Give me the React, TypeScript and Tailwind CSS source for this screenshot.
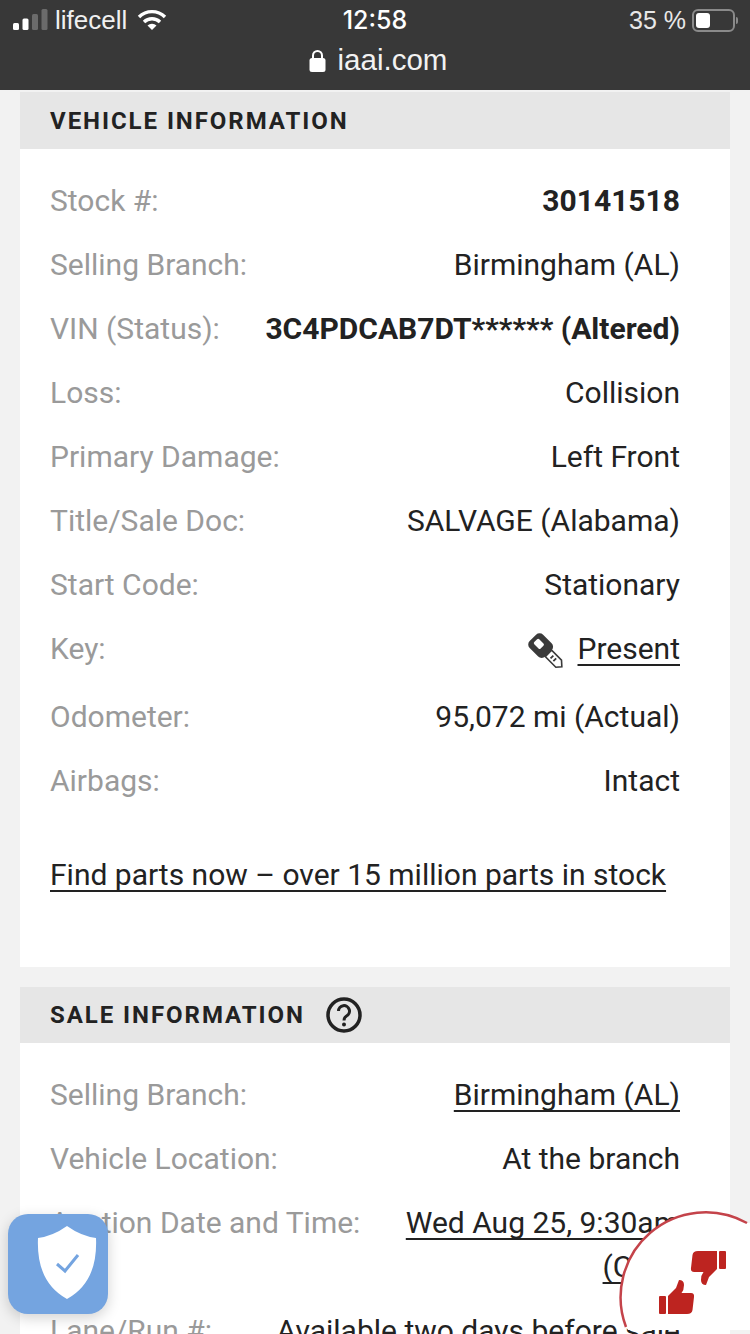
const rows: { label: string; value: string; bold?: boolean }[] = [
  { label: "Stock #:", value: "30141518", bold: true },
  { label: "Selling Branch:", value: "Birmingham (AL)" },
  { label: "VIN (Status):", value: "3C4PDCAB7DT****** (Altered)", bold: true },
  { label: "Loss:", value: "Collision" },
  { label: "Primary Damage:", value: "Left Front" },
  { label: "Title/Sale Doc:", value: "SALVAGE (Alabama)" },
  { label: "Start Code:", value: "Stationary" },
];

function StatusBar() {
  return (
    <div className="h-[90px] bg-[#383838] text-white font-['Liberation_Sans',sans-serif]">
      <div className="grid h-[40px] grid-cols-3 items-center text-[25px] leading-[30px]">
        <div className="flex items-center pl-[13px]">
          <svg width="35" height="22" viewBox="0 0 35 22">
            <rect x="0" y="14" width="6" height="7" rx="1.5" fill="#fff" />
            <rect x="9.5" y="9.5" width="6" height="11.5" rx="1.5" fill="#fff" />
            <rect x="19" y="5" width="6" height="16" rx="1.5" fill="#6b6b6b" />
            <rect x="28.5" y="0" width="6" height="21" rx="1.5" fill="#6b6b6b" />
          </svg>
          <span className="ml-[7px] text-[26px] text-[#f0f0f0]">lifecell</span>
          <svg className="ml-[10px]" width="30" height="22" viewBox="0 0 30 22" fill="none" stroke="#fff" strokeWidth="3.4">
            <path d="M2 8 A18.5 18.5 0 0 1 28 8" />
            <path d="M7 13 A11.5 11.5 0 0 1 23 13" />
            <path d="M15 21 L10.5 16.5 A6.4 6.4 0 0 1 19.5 16.5 Z" fill="#fff" stroke="none" />
          </svg>
        </div>
        <div className="text-center font-['Inter',sans-serif] text-[25px] font-medium">12:58</div>
        <div className="flex items-center justify-end pr-[12px]">
          <span className="text-[#e8e8e8]">35 %</span>
          <div className="ml-[6px] flex h-[23px] w-[43px] items-center rounded-[6px] border-2 border-[#8a8a8a] p-[2px]">
            <div className="h-[15px] w-[14px] rounded-[3px] bg-white" />
          </div>
          <div className="ml-[1px] h-[7px] w-[2px] rounded-r bg-[#8a8a8a]" />
        </div>
      </div>
      <div className="mt-[2px] flex items-center justify-center pl-[6px] text-[#f2f2f2]">
        <svg width="17" height="23" viewBox="0 0 17 23" fill="none">
          <path d="M4 10 V6.5 A4.5 4.5 0 0 1 13 6.5 V10" stroke="#fff" strokeWidth="2" />
          <rect x="0.5" y="9" width="16" height="14" rx="2.5" fill="#fff" />
        </svg>
        <span className="ml-[12px] text-[29.5px] leading-[36px]">iaai.com</span>
      </div>
    </div>
  );
}

function Row({ label, value, bold }: { label: string; value: string; bold?: boolean }) {
  return (
    <div className="flex h-16 items-center justify-between">
      <span className="text-[#9a9a9a]">{label}</span>
      <span className={bold ? "font-bold text-[#222]" : "text-[#222]"}>{value}</span>
    </div>
  );
}

function KeyIcon() {
  return (
    <svg width="36" height="44" viewBox="0 0 36 44">
      <g transform="translate(1 7) rotate(-45 18 18)">
        <rect x="8.500" y="-2" width="19" height="22" rx="5" fill="#3a3a3a" />
        <rect x="14.500" y="2" width="7" height="9" rx="1.500" fill="#fff" />
        <path d="M13.500 20 H22.500 V34 L18 39 L13.500 35 Z" fill="#fff" stroke="#3a3a3a" strokeWidth="1.600" />
        <path d="M16 25 H20 M16 29 H20" stroke="#3a3a3a" strokeWidth="1.800" />
      </g>
    </svg>
  );
}

function ThumbUp() {
  return (
    <svg width="36" height="36" viewBox="0 0 36 36" fill="#bd2420">
      <rect x="0" y="17" width="7" height="18" rx="1" />
      <path d="M9 17 L17 9 L20 1 Q25 1 25 6 Q25 11 22.5 14 H32 Q35.500 14 35 18 L33.500 31 Q33 35 28 35 H9 Z" />
    </svg>
  );
}

export default function App() {
  return (
    <div className="relative h-[1334px] w-[750px] overflow-hidden bg-[#f2f2f2] font-['Roboto',sans-serif] text-[30px] leading-[36px]">
      <StatusBar />

      <div className="mx-5 mt-[2px] w-[710px]">
        <h2 className="flex h-[57px] items-center bg-[#e6e6e6] pl-[30px] text-[24px] font-bold tracking-[1.95px] text-[#222]">
          VEHICLE INFORMATION
        </h2>
        <section className="h-[818px] bg-white pl-[30px] pr-[50px] pt-[20px]">
          {rows.map((r) => (
            <Row key={r.label} {...r} />
          ))}
          <div className="flex h-[68px] items-center justify-between pb-1">
            <span className="text-[#9a9a9a]">Key:</span>
            <span className="flex items-center text-[#222]">
              <KeyIcon />
              <span className="ml-[14px] underline decoration-2 underline-offset-[5px] [text-decoration-skip-ink:none]">Present</span>
            </span>
          </div>
          <Row label="Odometer:" value="95,072 mi (Actual)" />
          <Row label="Airbags:" value="Intact" />
          <a className="mt-[44px] block text-[#222] underline decoration-2 underline-offset-[5px] [text-decoration-skip-ink:none]">
            Find parts now – over 15 million parts in stock
          </a>
        </section>

        <h2 className="mt-5 flex h-[56px] items-center bg-[#e6e6e6] pl-[30px] text-[24px] font-bold tracking-[1.95px] text-[#222]">
          SALE INFORMATION
          <svg className="ml-[21px]" width="36" height="36" viewBox="0 0 36 36" fill="none" stroke="#222" strokeWidth="3.5">
            <circle cx="18" cy="18" r="16" />
            <path d="M12.500 14 A5.500 5.500 0 1 1 20.500 19 Q18 20.500 18 23.500" strokeWidth="3" />
            <circle cx="18" cy="27.500" r="2" fill="#222" stroke="none" />
          </svg>
        </h2>
        <section className="bg-white pl-[30px] pr-[50px] pt-[20px]">
          <div className="flex h-16 items-center justify-between">
            <span className="text-[#9a9a9a]">Selling Branch:</span>
            <span className="text-[#222] underline decoration-2 underline-offset-[5px] [text-decoration-skip-ink:none]">Birmingham (AL)</span>
          </div>
          <Row label="Vehicle Location:" value="At the branch" />
          <div className="flex h-[108px] items-start justify-between pt-[10px] leading-[44px]">
            <span className="text-[#9a9a9a]">Auction Date and Time:</span>
            <span className="w-[275px] text-right text-[#222] underline decoration-2 underline-offset-[5px] [text-decoration-skip-ink:none]">
              Wed Aug 25, 9:30am (CDT)
            </span>
          </div>
          <div className="flex h-16 items-center justify-between">
            <span className="text-[#9a9a9a]">Lane/Run #:</span>
            <span className="text-[#222]">Available two days before sale</span>
          </div>
        </section>
      </div>

      <div className="absolute left-2 top-[1214px] flex h-[100px] w-[100px] items-center justify-center rounded-[20px] bg-[#74a4e0] pl-[17px] pb-[3px] shadow-[0_4px_14px_rgba(0,0,0,0.18)]">
        <svg width="60" height="74" viewBox="0 0 60 74">
          <path d="M30 0 Q44 10 59 12 Q61 56 30 73 Q-1 56 1 12 Q16 10 30 0 Z" fill="#fff" />
          <path d="M20 38 L28 45 L41 29" fill="none" stroke="#74a4e0" strokeWidth="3" />
        </svg>
      </div>

      <svg className="absolute left-[611px] top-[1204px]" width="139" height="130" viewBox="0 0 139 130">
        <path d="M136 19 A85 85 0 0 0 15 123 L17 126 H139 V19 Z" fill="#fff" />
        <path d="M136 19 A85 85 0 0 0 15 123" fill="none" stroke="#c4434a" strokeWidth="2.500" />
      </svg>
      <div className="absolute left-[659px] top-[1279px]">
        <ThumbUp />
      </div>
      <div className="absolute left-[690px] top-[1250px] rotate-180">
        <ThumbUp />
      </div>
    </div>
  );
}
